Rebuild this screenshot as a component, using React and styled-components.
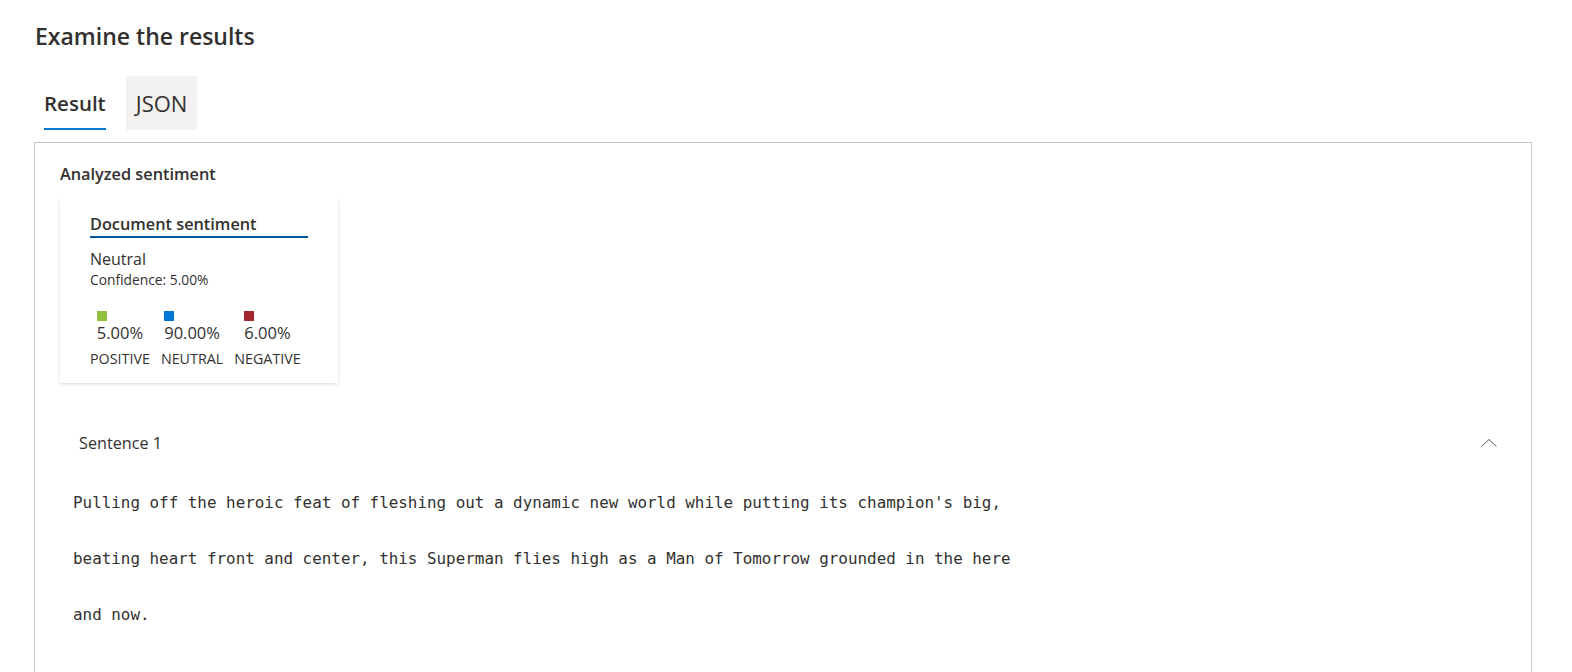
import React from "react";
import styled, { createGlobalStyle } from "styled-components";

const Global = createGlobalStyle`
  html, body { margin: 0; padding: 0; background: #fff; }
  body { font-family: "Open Sans", "Noto Sans", sans-serif; color: #323130; }
`;

const Page = styled.div`
  padding: 18px 40px 0 34px;
  height: 672px;
  box-sizing: border-box;
  overflow: hidden;
`;

const Title = styled.h2`
  margin: 0 0 0 1px;
  font-size: 23px;
  font-weight: 600;
  line-height: 36px;
  color: #323130;
`;

const Tabs = styled.div`
  display: flex;
  margin-top: 22px;
  margin-left: 2px;
  height: 54px;
`;

const Tab = styled.div`
  position: relative;
  display: flex;
  align-items: center;
  padding: 0 ${(p) => (p.$active ? "8px" : "10px")};
  margin-right: ${(p) => (p.$active ? "12px" : "0")};
  font-size: ${(p) => (p.$active ? "20.5px" : "22px")};
  font-weight: ${(p) => (p.$active ? 600 : 400)};
  color: #323130;
  background: ${(p) => (p.$active ? "transparent" : "#f3f2f1")};
  &::after {
    content: "";
    display: ${(p) => (p.$active ? "block" : "none")};
    position: absolute;
    left: 8px;
    right: 8px;
    bottom: 0;
    height: 2px;
    background: #0078d4;
  }
`;

const Panel = styled.div`
  margin-top: 12px;
  width: 1498px;
  box-sizing: border-box;
  border: 1px solid #c8c6c4;
  padding: 19px 25px 0 25px;
  height: 600px;
`;

const SectionLabel = styled.div`
  font-size: 16.3px;
  font-weight: 600;
  line-height: 24px;
  color: #323130;
`;

const Card = styled.div`
  margin-top: 12px;
  width: 278px;
  height: 185px;
  box-sizing: border-box;
  padding: 15px 30px 0 30px;
  background: #fff;
  box-shadow: 0 1.6px 3.6px rgba(0, 0, 0, 0.13), 0 0.3px 0.9px rgba(0, 0, 0, 0.11);
`;

const CardTitle = styled.div`
  font-size: 16.3px;
  font-weight: 600;
  line-height: 22px;
  color: #323130;
  border-bottom: 2px solid #005a9e;
  padding-bottom: 1px;
`;

const Label = styled.div`
  margin-top: 11px;
  font-size: 16px;
  line-height: 20px;
`;

const Confidence = styled.div`
  margin-top: 2px;
  font-size: 13.8px;
  line-height: 18px;
`;

const Scores = styled.div`
  display: flex;
  gap: 11px;
  margin-top: 22px;
`;

const Score = styled.div`
  display: flex;
  flex-direction: column;
  align-items: center;
`;

const ScoreValue = styled.div`
  display: flex;
  flex-direction: column;
  align-items: flex-start;
`;

const Swatch = styled.div`
  width: 10px;
  height: 10px;
  background: ${(p) => p.$color};
`;

const Pct = styled.div`
  font-size: 16.5px;
  line-height: 22px;
  margin-top: 1px;
`;

const ScoreName = styled.div`
  font-size: 14.3px;
  line-height: 18px;
  margin-top: 6px;
`;

const Accordion = styled.div`
  margin-top: 48px;
`;

const AccordionHeader = styled.div`
  display: flex;
  align-items: center;
  justify-content: space-between;
  padding: 0 9px 0 19px;
  height: 24px;
  font-size: 16.2px;
  color: #323130;
`;

const Code = styled.div`
  margin-top: 20px;
  padding-left: 13px;
  font-family: "DejaVu Sans Mono", "Liberation Mono", monospace;
  font-size: 15.9px;
  color: #323130;
`;

const CodeLine = styled.div`
  line-height: 56px;
  white-space: pre;
`;

const ChevronUp = () => (
  <svg width="16" height="10" viewBox="0 0 16 10">
    <path d="M0.5 8.5 L8 1.5 L15.5 8.5" fill="none" stroke="#605e5c" strokeWidth="1" />
  </svg>
);

const scores = [
  { v: "5.00%", n: "POSITIVE", c: "#92c03e" },
  { v: "90.00%", n: "NEUTRAL", c: "#0078d4" },
  { v: "6.00%", n: "NEGATIVE", c: "#a4262c" },
];

export default function App() {
  return (
    <>
      <Global />
      <Page>
        <Title>Examine the results</Title>
        <Tabs>
          <Tab $active>Result</Tab>
          <Tab>JSON</Tab>
        </Tabs>
        <Panel>
          <SectionLabel>Analyzed sentiment</SectionLabel>
          <Card>
            <CardTitle>Document sentiment</CardTitle>
            <Label>Neutral</Label>
            <Confidence>Confidence: 5.00%</Confidence>
            <Scores>
              {scores.map((s) => (
                <Score key={s.n}>
                  <ScoreValue>
                    <Swatch $color={s.c} />
                    <Pct>{s.v}</Pct>
                  </ScoreValue>
                  <ScoreName>{s.n}</ScoreName>
                </Score>
              ))}
            </Scores>
          </Card>
          <Accordion>
            <AccordionHeader>
              <span>Sentence 1</span>
              <ChevronUp />
            </AccordionHeader>
            <Code>
              <CodeLine>Pulling off the heroic feat of fleshing out a dynamic new world while putting its champion's big,</CodeLine>
              <CodeLine>beating heart front and center, this Superman flies high as a Man of Tomorrow grounded in the here</CodeLine>
              <CodeLine>and now.</CodeLine>
            </Code>
          </Accordion>
        </Panel>
      </Page>
    </>
  );
}
